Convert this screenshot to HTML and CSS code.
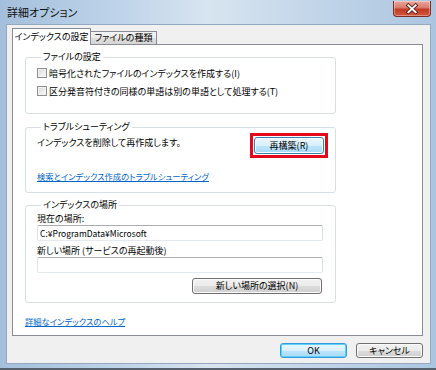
FILE: index.html
```html
<!DOCTYPE html>
<html lang="ja">
<head>
    <meta charset="UTF-8">
    <title>詳細オプション</title>
    <link rel="stylesheet" href="styles.css">
</head>
<body>
    <div class="window">
        <div class="titlebar">
            <span class="title">詳細オプション</span>
            <button class="close-btn" aria-label="閉じる">
                <svg width="39" height="16" viewBox="0 0 39 16">
                    <path d="M15.5 4 L23.5 11.5 M23.5 4 L15.5 11.5" stroke="#5b2219" stroke-width="4" stroke-linecap="square"/>
                    <path d="M15.5 4 L23.5 11.5 M23.5 4 L15.5 11.5" stroke="#ffffff" stroke-width="2" stroke-linecap="square"/>
                </svg>
            </button>
        </div>

        <div class="client">
            <div class="tabs">
                <div class="tab active">インデックスの設定</div>
                <div class="tab">ファイルの種類</div>
            </div>

            <div class="panel">
                <!-- ファイルの設定 -->
                <fieldset class="group group-files">
                    <legend>ファイルの設定</legend>
                    <label class="check"><span class="box"></span>暗号化されたファイルのインデックスを作成する(I)</label>
                    <label class="check"><span class="box"></span>区分発音符付きの同様の単語は別の単語として処理する(T)</label>
                </fieldset>

                <!-- トラブルシューティング -->
                <fieldset class="group group-trouble">
                    <legend>トラブルシューティング</legend>
                    <div class="rebuild-row">
                        <span class="rebuild-text">インデックスを削除して再作成します。</span>
                        <span class="highlight"><button class="btn btn-hot btn-rebuild">再構築(R)</button></span>
                    </div>
                    <a class="link trouble-link" href="#">検索とインデックス作成のトラブルシューティング</a>
                </fieldset>

                <!-- インデックスの場所 -->
                <fieldset class="group group-location">
                    <legend>インデックスの場所</legend>
                    <div class="field-label first">現在の場所:</div>
                    <div class="textbox">C:¥ProgramData¥Microsoft</div>
                    <div class="field-label">新しい場所 (サービスの再起動後)</div>
                    <div class="textbox"></div>
                    <div class="select-row">
                        <button class="btn btn-select">新しい場所の選択(N)</button>
                    </div>
                </fieldset>

                <a class="link help-link" href="#">詳細なインデックスのヘルプ</a>
            </div>

            <div class="dialog-buttons">
                <button class="btn btn-hot btn-default">OK</button>
                <button class="btn">キャンセル</button>
            </div>
        </div>
    </div>
</body>
</html>
```

FILE: styles.css
```css
* {
    box-sizing: border-box;
}
body {
    margin: 0;
    font-family: "Noto Sans CJK JP", "Noto Sans", sans-serif;
    font-size: 9px;
    font-feature-settings: "palt";
    color: #000;
}
.window {
    width: 436px;
    height: 370px;
    padding: 0 6px 0 7px;
    background: linear-gradient(90deg, #a4bfdc 0%, #bcd2e8 25%, #d8e4f0 48%, #c4d7ea 70%, #abc5e0 100%);
    border-bottom: 2px solid #55606c;
}
.titlebar {
    height: 25px;
    display: flex;
    justify-content: space-between;
    align-items: flex-start;
}
.title {
    margin-top: 6px;
    font-size: 11px;
    line-height: 12px;
    color: #111;
}
.close-btn {
    width: 38px;
    height: 16px;
    margin: 1px -1px 0 0;
    padding: 0;
    border: 1px solid #7b2d22;
    border-top: none;
    border-radius: 0 0 4px 4px;
    background: linear-gradient(#e9a99c 0%, #d9796a 45%, #c23a23 55%, #d5573d 100%);
    box-shadow: inset 0 0 0 1px rgba(255, 255, 255, 0.35);
    display: flex;
    align-items: center;
    justify-content: center;
}
.close-btn svg {
    display: block;
}
.client {
    width: 423px;
    height: 338px;
    background-color: #f0f0f0;
    box-shadow: 0 0 0 1px #93a9c1;
}
/* tabs */
.tabs {
    height: 19px;
    padding-left: 5px;
    display: flex;
    align-items: flex-end;
}
.tab {
    height: 13px;
    padding: 0 5px;
    line-height: 12px;
    border: 1px solid #898c95;
    border-bottom: none;
    margin-left: -1px;
    background: linear-gradient(#f3f3f3 0%, #ebebeb 50%, #dedede 50%, #d6d6d6 100%);
}
.tab.active {
    height: 17px;
    width: 79px;
    margin-left: 0;
    margin-bottom: -1px;
    padding: 2px 0 0 0;
    text-align: center;
    background: #fff;
    position: relative;
    z-index: 1;
}
.tabs .tab:nth-child(2) {
    width: 67px;
    text-align: center;
    padding: 0;
}
.panel {
    width: 411px;
    height: 292px;
    margin-left: 5px;
    padding: 6px 0 0 12px;
    background: #fff;
    border: 1px solid #898c95;
}
/* group boxes */
.group {
    width: 311px;
    margin: 0;
    padding: 0 7px 0 11px;
    min-width: 0;
    border: 1px solid #d5dfe5;
    border-radius: 3px;
}
.group legend {
    margin-left: 4px;
    padding: 0 2px;
    line-height: 12px;
}
.group-files {
    padding-top: 1px;
    padding-bottom: 13px;
}
.group-trouble {
    margin-top: 7px;
    padding-bottom: 10px;
}
.group-location {
    margin-top: 6px;
    padding-bottom: 8px;
}
.check {
    height: 18px;
    display: flex;
    align-items: center;
}
.box {
    width: 10px;
    height: 10px;
    margin-right: 2px;
    border: 1px solid #8f8f8f;
    background: linear-gradient(135deg, #d6d6d6 0%, #eeeeee 60%, #fbfbfb 100%);
    box-shadow: inset 0 0 0 1px #f2f2f2;
}
.rebuild-row {
    height: 25px;
    display: flex;
    justify-content: space-between;
    align-items: flex-start;
}
.rebuild-text {
    margin-top: 4px;
    line-height: 12px;
}
.highlight {
    padding: 1px;
    border: 3px solid #e5081a;
}
.link {
    display: block;
    width: max-content;
    font-size: 8.3px;
    line-height: 12px;
    color: #0066cc;
    text-decoration: underline;
}
.trouble-link {
    margin-top: 12px;
}
.help-link {
    margin-top: 12px;
}
.field-label {
    margin-top: 4px;
    line-height: 12px;
}
.field-label.first {
    margin-top: 2px;
}
.textbox {
    width: 286px;
    height: 16px;
    padding-left: 2px;
    line-height: 14px;
    font-size: 8.5px;
    border: 1px solid;
    border-color: #abadb3 #dbdfe6 #e3e9ef #e2e3ea;
    border-radius: 2px;
    background: #fff;
}
.select-row {
    margin-top: 5px;
    padding-right: 6px;
    display: flex;
    justify-content: flex-end;
}
/* buttons */
.btn {
    height: 15px;
    padding: 0;
    font: inherit;
    line-height: 13px;
    color: #000;
    border: 1px solid #707070;
    border-radius: 3px;
    background: linear-gradient(#f2f2f2 0%, #ebebeb 50%, #dddddd 50%, #cfcfcf 100%);
    box-shadow: inset 0 0 0 1px #fbfbfb;
}
.btn-hot {
    border-color: #3c7fb1;
    background: linear-gradient(#eaf6fd 0%, #d9f0fc 50%, #bee6fd 50%, #a7d9f5 100%);
}
.btn-rebuild {
    display: block;
    width: 70px;
    height: 17px;
    line-height: 15px;
}
.btn-select {
    width: 130px;
    height: 16px;
    line-height: 14px;
}
.dialog-buttons {
    margin-top: 7px;
    padding-right: 7px;
    display: flex;
    justify-content: flex-end;
    gap: 9px;
}
.dialog-buttons .btn {
    width: 67px;
}
.btn-default {
    border-color: #3399dd;
    box-shadow: inset 0 0 0 1px #5fd0f8;
}
```
